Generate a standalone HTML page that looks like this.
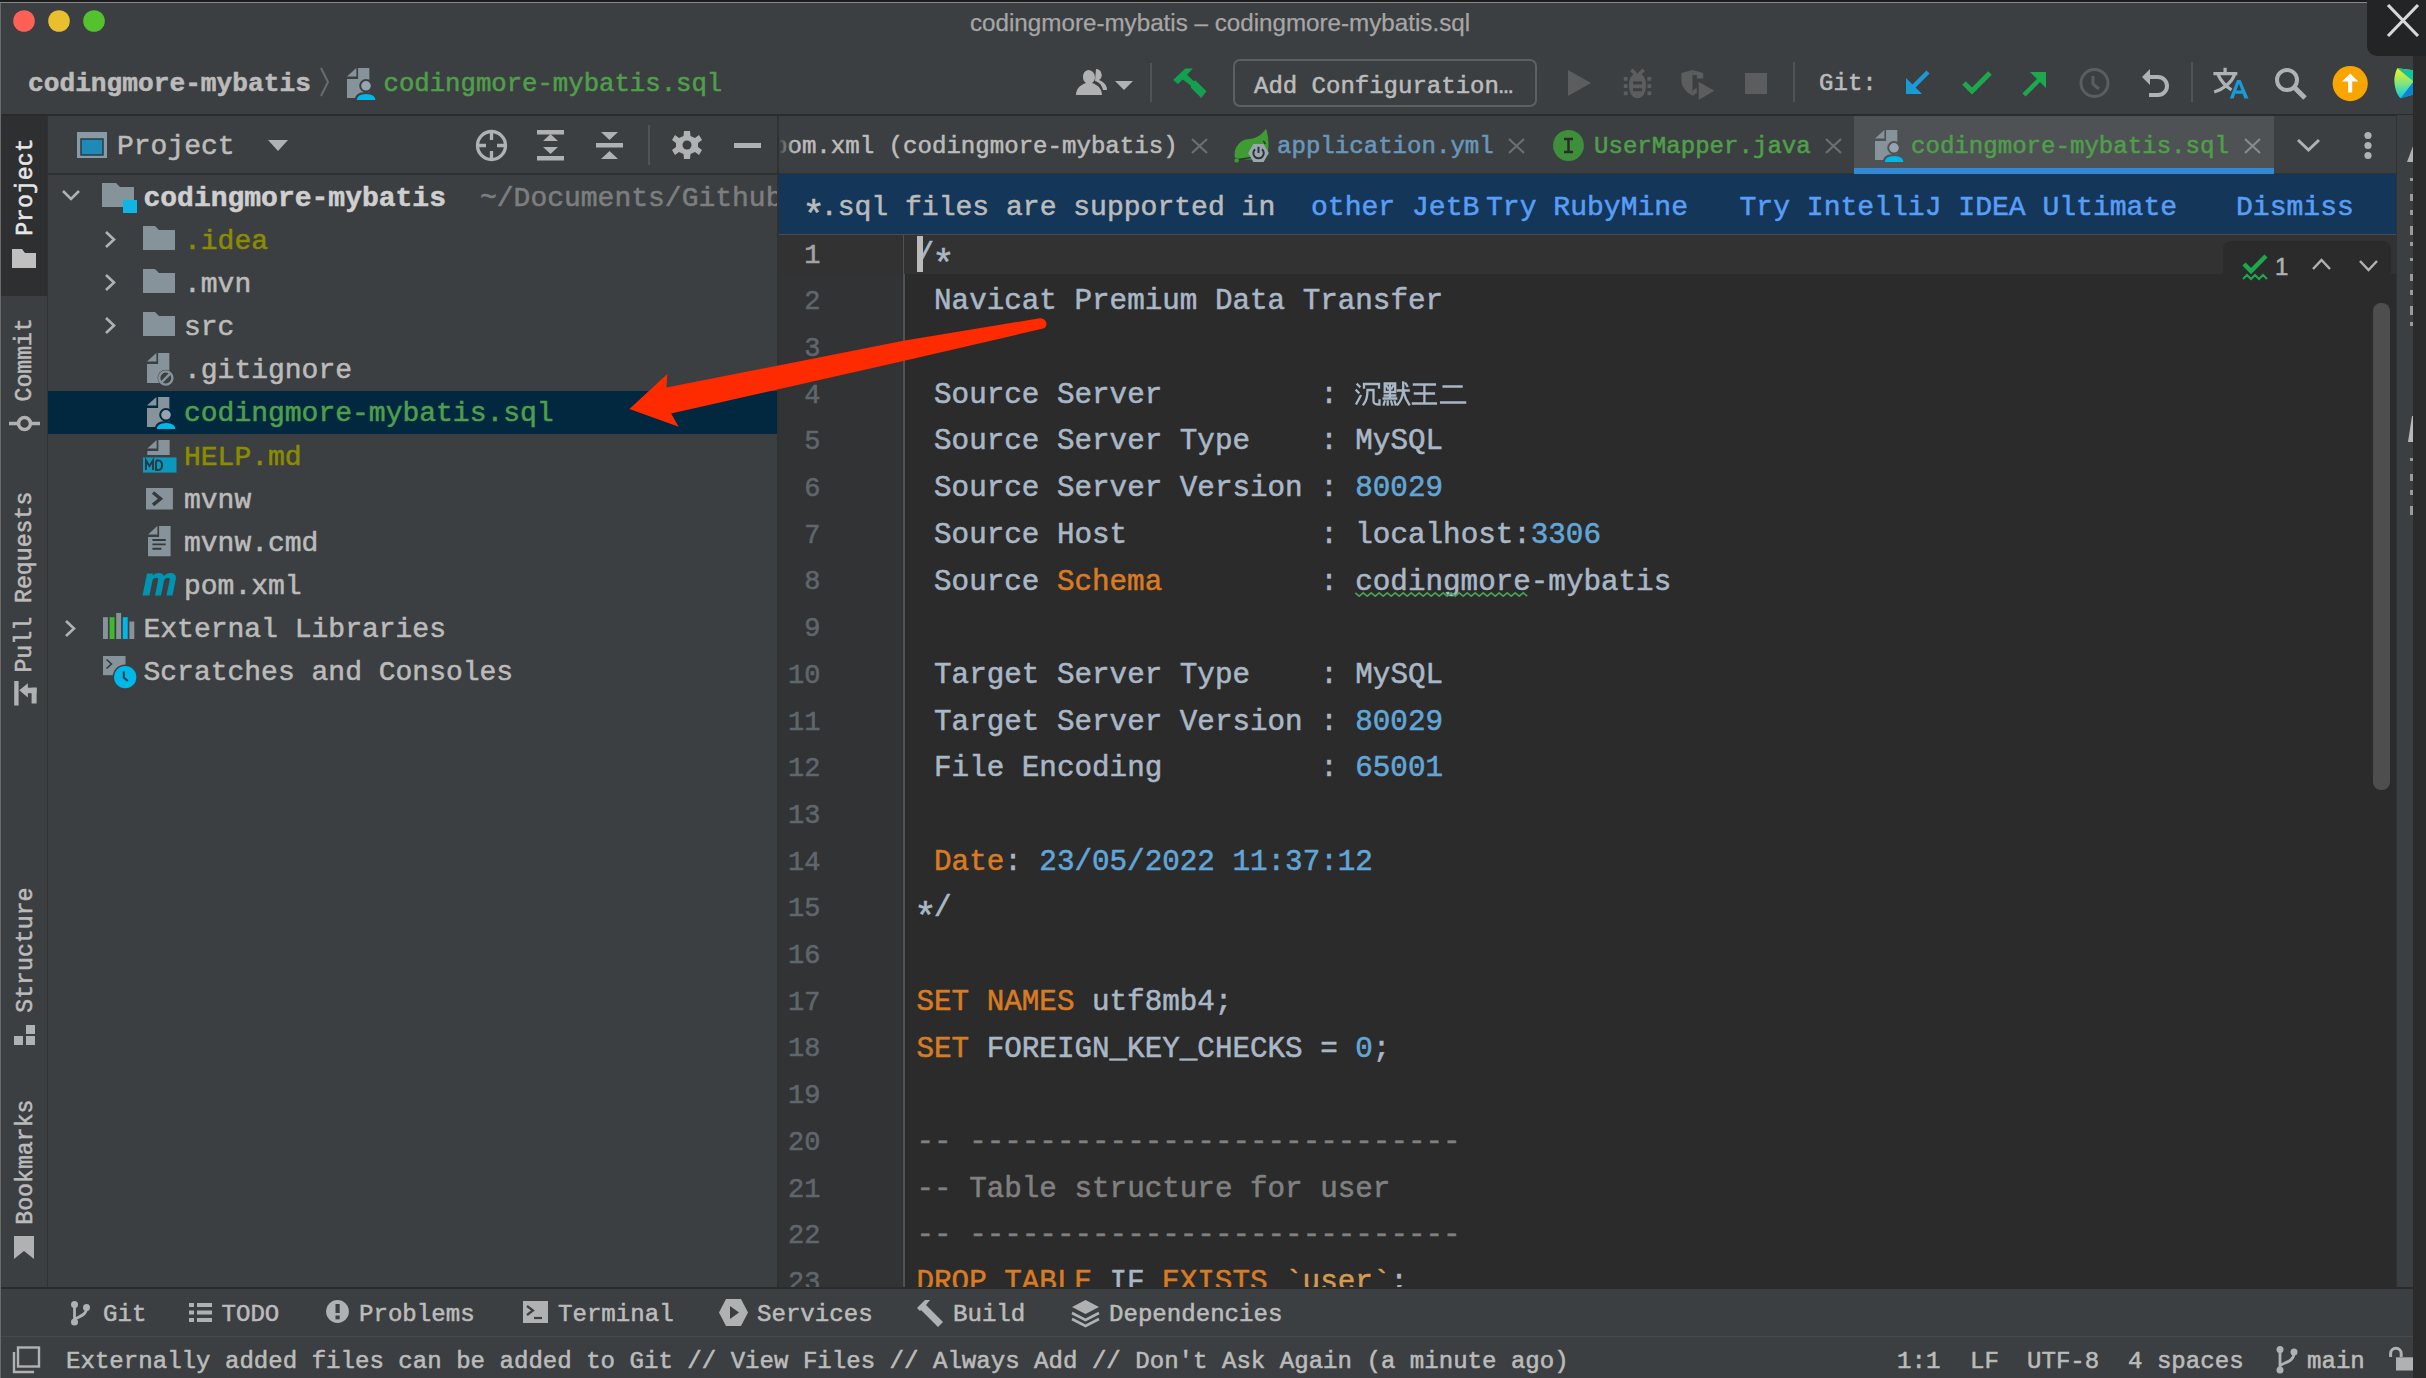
<!DOCTYPE html><html><head><meta charset="utf-8"><style>
html,body{margin:0;padding:0;width:2426px;height:1378px;overflow:hidden;background:#1e1f22;}
#root{position:relative;width:2426px;height:1378px;overflow:hidden;background:#3c3f41;}
.t{position:absolute;white-space:pre;line-height:1.1328;-webkit-text-stroke:0.55px currentColor;}
.r{position:absolute;}
.s{position:absolute;overflow:visible;}
</style></head><body><div id="root">
<div class="r" style="left:0px;top:0px;width:2426px;height:3px;background:#1c1c1c;"></div>
<div class="r" style="left:0px;top:2px;width:2426px;height:1px;background:#8a8a8a;"></div>
<div class="r" style="left:0px;top:3px;width:2426px;height:112px;background:#3c3f41;"></div>
<div class="r" style="left:2367px;top:0px;width:59px;height:56px;background:#222426;border-bottom-left-radius:10px;"></div>
<svg class="s" style="left:2385px;top:3px;" width="36" height="36" viewBox="0 0 36 36"><path d="M3 2 L33 33 M33 2 L3 33" stroke="#d8d8d8" stroke-width="3.2" fill="none"/></svg>
<svg class="s" style="left:0px;top:0px;" width="120" height="45" viewBox="0 0 120 45"><circle cx="24" cy="21" r="10.8" fill="#fe5f57"/><circle cx="59" cy="21" r="10.8" fill="#e9bf2d"/><circle cx="94" cy="21" r="10.8" fill="#54c22f"/></svg>
<div class="t" style="left:970.00px;top:8.85px;font-size:24.2px;color:#a6a6a6;font-weight:400;font-family:'Liberation Sans';letter-spacing:0px;-webkit-text-stroke:0.25px currentColor;">codingmore-mybatis – codingmore-mybatis.sql</div>
<div class="t" style="left:28.00px;top:69.69px;font-size:26.2px;color:#bbbbbb;font-weight:700;font-family:'Liberation Mono';letter-spacing:0px;">codingmore-mybatis</div>
<svg class="s" style="left:318px;top:66px;" width="14" height="32" viewBox="0 0 14 32"><path d="M3 2 L10 16 L3 30" stroke="#6b6b6b" stroke-width="2" fill="none"/></svg>
<svg class="s" style="left:347.25px;top:68.2px;" width="32" height="34" viewBox="0 0 32 34"><path d="M0 8.5 L9.35 0 L9.35 8.5 Z" fill="#87939b"/><path d="M11.1 0 H22.35 V30 H0 V10.9 H11.1 Z" fill="#87939b"/><circle cx="19" cy="17.8" r="5.8" fill="#95a4ae" stroke="#3c3f41" stroke-width="2"/><path d="M8.65 33 C8.65 27.3 13 25 19.1 25 C25.2 25 29.55 27.3 29.55 33 Z" fill="#00b8e8" stroke="#3c3f41" stroke-width="2"/></svg>
<div class="t" style="left:383.50px;top:70.13px;font-size:25.67px;color:#4f9f4a;font-weight:400;font-family:'Liberation Mono';letter-spacing:0px;">codingmore-mybatis.sql</div>
<svg class="s" style="left:1076px;top:68px;" width="60" height="30" viewBox="0 0 60 30"><path d="M12 2 a7 7 0 0 1 7 7 a7 7 0 0 1 -3 6 c6 2 10 6 10 12 L0 27 c0 -6 4 -10 10 -12 a7 7 0 0 1 -3 -6 a7 7 0 0 1 5 -7z" fill="#afb1b3"/><path d="M20 1 a6 6 0 0 1 3 11 c5 2 8 5 8 10 l-4 0 c-1 -5 -4 -8 -8 -9 z" fill="#afb1b3"/><path d="M39 13 L57 13 L48 22 Z" fill="#afb1b3"/></svg>
<div class="r" style="left:1150px;top:63px;width:2px;height:39px;background:#535353;"></div>
<svg class="s" style="left:1170px;top:65px;" width="40" height="36" viewBox="0 0 40 36"><path d="M3.1 15.1 L15.3 3.5 L22.9 3.5 L17 9.8 L23.5 16 L25.5 15.6 L36.4 26.3 L31.2 32.9 L21 22.8 L20.8 20.6 L12.7 14.4 L8 19 Z" fill="#13a150"/></svg>
<div class="r" style="left:1233px;top:59px;width:304px;height:48px;background:transparent;box-sizing:border-box;border:2px solid #5e6060;border-radius:7px;"></div>
<div class="t" style="left:1254.00px;top:72.52px;font-size:24.0px;color:#bbbbbb;font-weight:400;font-family:'Liberation Mono';letter-spacing:0px;">Add Configuration…</div>
<svg class="s" style="left:1568px;top:70px;" width="24" height="26" viewBox="0 0 24 26"><path d="M0 0 L23 13 L0 26 Z" fill="#5c5d5e"/></svg>
<svg class="s" style="left:1623px;top:68px;" width="30" height="32" viewBox="0 0 30 32"><path d="M8.3 1.8 L13 6.5 M20.7 1.8 L16 6.5" stroke="#5c5d5e" stroke-width="3.6"/><rect x="0.8" y="9" width="3.8" height="3.8" fill="#5c5d5e"/><rect x="0.8" y="16.2" width="3.8" height="3.8" fill="#5c5d5e"/><rect x="0.8" y="23.4" width="3.8" height="3.8" fill="#5c5d5e"/><rect x="24.4" y="9" width="3.8" height="3.8" fill="#5c5d5e"/><rect x="24.4" y="16.2" width="3.8" height="3.8" fill="#5c5d5e"/><rect x="24.4" y="23.4" width="3.8" height="3.8" fill="#5c5d5e"/><path d="M14.5 5.2 C20 5.2 23 10 23 17 C23 25 19.5 30.3 14.5 30.3 C9.5 30.3 6 25 6 17 C6 10 9 5.2 14.5 5.2 Z" fill="#5c5d5e"/><rect x="10" y="13.4" width="9" height="3" fill="#3c3f41"/><rect x="10" y="20.2" width="9" height="3" fill="#3c3f41"/></svg>
<svg class="s" style="left:1681px;top:70px;" width="34" height="31" viewBox="0 0 34 31"><path d="M0.4 3 L11.5 0 L11.5 25.8 C5 22 0.4 17 0.4 10 Z" fill="#5c5d5e"/><path d="M11.5 0 L22.2 3 L22.2 8.6 L15.8 8.6 L15.8 5 L11.5 5 Z" fill="#5c5d5e"/><path d="M11.5 21 L15.8 17.5 L15.8 23 L11.5 25.8 Z" fill="#5c5d5e"/><path d="M17.7 11.8 L33.3 20.8 L17.7 29.9 Z" fill="#5c5d5e"/></svg>
<svg class="s" style="left:1745px;top:73px;" width="23" height="22" viewBox="0 0 23 22"><rect x="0" y="0" width="22" height="21" fill="#5c5d5e"/></svg>
<div class="r" style="left:1793px;top:62px;width:2px;height:40px;background:#535353;"></div>
<div class="t" style="left:1819.00px;top:70.45px;font-size:24.08px;color:#bbbbbb;font-weight:400;font-family:'Liberation Mono';letter-spacing:0px;">Git:</div>
<svg class="s" style="left:1904px;top:70px;" width="26" height="26" viewBox="0 0 26 26"><path d="M24 2 L8 18" stroke="#1a9ad6" stroke-width="4.5"/><path d="M2 8 L2 24 L18 24 Z" fill="#1a9ad6"/></svg>
<svg class="s" style="left:1961px;top:70px;" width="32" height="26" viewBox="0 0 32 26"><path d="M3 13 L11 21 L29 3" stroke="#1ea84e" stroke-width="5" fill="none"/></svg>
<svg class="s" style="left:2021px;top:71px;" width="27" height="26" viewBox="0 0 27 26"><path d="M3 24 L19 8" stroke="#1ea84e" stroke-width="4.5"/><path d="M9 1 L25 1 L25 17 Z" fill="#1ea84e"/></svg>
<svg class="s" style="left:2079px;top:68px;" width="32" height="32" viewBox="0 0 32 32"><circle cx="15.5" cy="15" r="13.5" stroke="#5b5d5f" stroke-width="3" fill="none"/><path d="M14 8 L14 16 L20 21" stroke="#5b5d5f" stroke-width="3" fill="none"/></svg>
<svg class="s" style="left:2140px;top:68px;" width="32" height="30" viewBox="0 0 32 30"><path d="M2 9 L10 1 L10 17 Z" fill="#afb1b3"/><path d="M9 9 L18 9 A9 9 0 0 1 18 27 L9 27" stroke="#afb1b3" stroke-width="4" fill="none"/></svg>
<div class="r" style="left:2191px;top:62px;width:2px;height:40px;background:#535353;"></div>
<svg class="s" style="left:2212px;top:68px;" width="38" height="32" viewBox="0 0 38 32"><path d="M13.1 -0.3 V4.2 M1.4 5.6 H25.3 M6.1 6.8 C9 13 13 18 19.5 21.8 M22.5 6.8 C20 14 12 21 2.2 24" stroke="#afb1b3" stroke-width="3.2" fill="none"/><path d="M17.8 30.5 L25 12 L28.6 12 L36.5 30.5 L32.4 30.5 L30.6 25.8 L23.2 25.8 L21.6 30.5 Z M24.4 22.4 L29.4 22.4 L26.9 15.6 Z" fill="#1a9ad6"/></svg>
<svg class="s" style="left:2274px;top:67px;" width="34" height="34" viewBox="0 0 34 34"><circle cx="13" cy="13" r="10" stroke="#afb1b3" stroke-width="4" fill="none"/><path d="M20 20 L31 31" stroke="#afb1b3" stroke-width="5"/></svg>
<svg class="s" style="left:2332px;top:65px;" width="36" height="37" viewBox="0 0 36 37"><circle cx="18.2" cy="18.6" r="17.6" fill="#f8a500"/><path d="M18.2 8.6 L26.4 16.6 L20.2 16.6 L20.2 27.6 L16.2 27.6 L16.2 16.6 L10 16.6 Z" fill="#ffffff"/></svg>
<svg class="s" style="left:2390px;top:65px;" width="24" height="36" viewBox="0 0 24 36"><defs><linearGradient id="lg" x1="0" y1="0" x2="0" y2="1"><stop offset="0" stop-color="#f2f418"/><stop offset="0.5" stop-color="#84e47c"/><stop offset="1" stop-color="#00cce8"/></linearGradient></defs><path d="M7.3 3.2 C5 8 4 13 4.4 17 C5 24 7 30 10.6 33.3 L23.5 29.6 L23.5 5.3 Z" fill="url(#lg)"/><path d="M7.3 3.2 L23.5 5.3 L23.5 16.5 Z" fill="#10c49c"/><path d="M10.6 33.3 L23.5 29.6 L23.5 16.5 Z" fill="#0a84dc"/></svg>
<div class="r" style="left:0px;top:115px;width:47px;height:1172px;background:#3c3f41;"></div>
<div class="r" style="left:47px;top:115px;width:1px;height:1172px;background:#323232;"></div>
<div class="r" style="left:1px;top:115px;width:46px;height:181px;background:#2d2f30;"></div>
<div class="t" style="left:-23.5px;top:173.9px;width:98px;font-size:23.2px;color:#e6e6e6;font-weight:400;font-family:'Liberation Mono';transform:rotate(-90deg);text-align:center;">Project</div>
<svg class="s" style="left:12px;top:249px;" width="25" height="19" viewBox="0 0 25 19"><path d="M0 0 L10 0 L13 4 L24 4 L24 19 L0 19 Z" fill="#c0c0c0"/></svg>
<div class="t" style="left:-15.9px;top:347.1px;width:82.80000000000001px;font-size:23.2px;color:#bbbbbb;font-weight:400;font-family:'Liberation Mono';transform:rotate(-90deg);text-align:center;">Commit</div>
<svg class="s" style="left:9px;top:414px;" width="31" height="19" viewBox="0 0 31 19"><circle cx="15.5" cy="9.5" r="6" stroke="#afb1b3" stroke-width="3.5" fill="none"/><path d="M0 9.5 L9 9.5 M22 9.5 L31 9.5" stroke="#afb1b3" stroke-width="3.5"/></svg>
<div class="t" style="left:-65.8px;top:568.6px;width:182.5px;font-size:23.2px;color:#bbbbbb;font-weight:400;font-family:'Liberation Mono';transform:rotate(-90deg);text-align:center;">Pull Requests</div>
<svg class="s" style="left:12px;top:681px;" width="26" height="25" viewBox="0 0 26 25"><rect x="2.2" y="0" width="4.4" height="24.5" fill="#afb1b3"/><path d="M7.2 9.3 L15.9 2.3 L15.9 16.5 Z" fill="#afb1b3"/><rect x="15" y="6.7" width="9.6" height="5.5" fill="#afb1b3"/><rect x="19.6" y="6.7" width="5" height="15.8" fill="#afb1b3"/></svg>
<div class="t" style="left:-38.5px;top:936.9px;width:128px;font-size:23.2px;color:#bbbbbb;font-weight:400;font-family:'Liberation Mono';transform:rotate(-90deg);text-align:center;">Structure</div>
<svg class="s" style="left:14px;top:1025px;" width="21" height="21" viewBox="0 0 21 21"><rect x="0" y="11" width="9" height="9" fill="#afb1b3"/><rect x="12" y="11" width="9" height="9" fill="#afb1b3"/><rect x="12" y="0" width="9" height="9" fill="#afb1b3"/></svg>
<div class="t" style="left:-37.5px;top:1148.9px;width:126px;font-size:23.2px;color:#bbbbbb;font-weight:400;font-family:'Liberation Mono';transform:rotate(-90deg);text-align:center;">Bookmarks</div>
<svg class="s" style="left:14px;top:1236px;" width="21" height="23" viewBox="0 0 21 23"><path d="M0 0 L20 0 L20 23 L10 15 L0 23 Z" fill="#afb1b3"/></svg>
<div class="r" style="left:48px;top:115px;width:730px;height:1172px;background:#3c3f41;"></div>
<div class="r" style="left:48px;top:173px;width:730px;height:2px;background:#2d2f31;"></div>
<svg class="s" style="left:76px;top:131px;" width="32" height="28" viewBox="0 0 32 28"><rect x="1" y="1" width="30" height="26" fill="#8a9aa5"/><rect x="5" y="8" width="22" height="16" fill="#1e8ab5" stroke="#2a3a44" stroke-width="1.5"/></svg>
<div class="t" style="left:117.00px;top:130.99px;font-size:28.0px;color:#bbbbbb;font-weight:400;font-family:'Liberation Mono';letter-spacing:0px;">Project</div>
<svg class="s" style="left:268px;top:140px;" width="20" height="12" viewBox="0 0 20 12"><path d="M0 0 L20 0 L10 11 Z" fill="#afb1b3"/></svg>
<svg class="s" style="left:475px;top:129px;" width="34" height="34" viewBox="0 0 34 34"><circle cx="16.5" cy="16.5" r="14" stroke="#afb1b3" stroke-width="3.3" fill="none"/><path d="M16.5 2 L16.5 11 M16.5 22 L16.5 31 M2 16.5 L11 16.5 M22 16.5 L31 16.5" stroke="#afb1b3" stroke-width="3.3"/></svg>
<svg class="s" style="left:537px;top:130px;" width="28" height="32" viewBox="0 0 28 32"><rect x="0" y="0" width="27" height="4.5" fill="#afb1b3"/><rect x="0" y="26" width="27" height="4.5" fill="#afb1b3"/><path d="M6 11 L21 11 L13.5 4 Z M6 17 L21 17 L13.5 24 Z" fill="#afb1b3"/></svg>
<svg class="s" style="left:596px;top:131px;" width="28" height="30" viewBox="0 0 28 30"><path d="M5 1 L22 1 L13.5 9 Z" fill="#afb1b3"/><rect x="0" y="12" width="27" height="4.5" fill="#afb1b3"/><path d="M5 28 L22 28 L13.5 20 Z" fill="#afb1b3"/></svg>
<div class="r" style="left:648px;top:125px;width:2px;height:40px;background:#535353;"></div>
<svg class="s" style="left:673px;top:131px;" width="30" height="30" viewBox="0 0 30 30"><g transform="translate(14 14)"><path d="M-3 -14 L3 -14 L3.5 -9 L8 -7 L12 -10 L15 -5 L11 -2 L11 2 L15 5 L12 10 L8 7 L3.5 9 L3 14 L-3 14 L-3.5 9 L-8 7 L-12 10 L-15 5 L-11 2 L-11 -2 L-15 -5 L-12 -10 L-8 -7 L-3.5 -9 Z" fill="#afb1b3"/><circle cx="0" cy="0" r="4.5" fill="#3c3f41"/></g></svg>
<div class="r" style="left:734px;top:143px;width:27px;height:5px;background:#afb1b3;"></div>
<div class="r" style="left:48px;top:391px;width:730px;height:43px;background:#022840;"></div>
<svg class="s" style="left:61px;top:189px;" width="20" height="12" viewBox="0 0 20 12"><path d="M2 2 L10 10 L18 2" stroke="#afb1b3" stroke-width="2.6" fill="none"/></svg>
<svg class="s" style="left:102px;top:183px;" width="36" height="31" viewBox="0 0 36 31"><path d="M0 0 L14 0 L18 4 L32 4 L32 18 L22 18 L22 24 L0 24 Z" fill="#87939b"/><rect x="21" y="17" width="14" height="13" fill="#10b5e8"/></svg>
<div class="t" style="left:143.50px;top:182.69px;font-size:28.0px;color:#cfcfcf;font-weight:700;font-family:'Liberation Mono';letter-spacing:0px;">codingmore-mybatis</div>
<div class="t" style="left:480.00px;top:182.69px;font-size:28.0px;color:#7c7e7f;font-weight:400;font-family:'Liberation Mono';letter-spacing:0px;">~/Documents/Github</div>
<svg class="s" style="left:104px;top:230px;" width="13" height="19" viewBox="0 0 13 19"><path d="M2 2 L10 9.5 L2 17" stroke="#afb1b3" stroke-width="2.6" fill="none"/></svg>
<svg class="s" style="left:143px;top:226px;" width="32" height="25" viewBox="0 0 32 25"><path d="M0 0 L12 0 L16 4 L32 4 L32 24 L0 24 Z" fill="#87939b"/></svg>
<div class="t" style="left:184.00px;top:225.84px;font-size:28.0px;color:#8c8c00;font-weight:400;font-family:'Liberation Mono';letter-spacing:0px;">.idea</div>
<svg class="s" style="left:104px;top:273px;" width="13" height="19" viewBox="0 0 13 19"><path d="M2 2 L10 9.5 L2 17" stroke="#afb1b3" stroke-width="2.6" fill="none"/></svg>
<svg class="s" style="left:143px;top:269px;" width="32" height="25" viewBox="0 0 32 25"><path d="M0 0 L12 0 L16 4 L32 4 L32 24 L0 24 Z" fill="#87939b"/></svg>
<div class="t" style="left:184.00px;top:268.99px;font-size:28.0px;color:#bbbbbb;font-weight:400;font-family:'Liberation Mono';letter-spacing:0px;">.mvn</div>
<svg class="s" style="left:104px;top:316px;" width="13" height="19" viewBox="0 0 13 19"><path d="M2 2 L10 9.5 L2 17" stroke="#afb1b3" stroke-width="2.6" fill="none"/></svg>
<svg class="s" style="left:143px;top:312px;" width="32" height="25" viewBox="0 0 32 25"><path d="M0 0 L12 0 L16 4 L32 4 L32 24 L0 24 Z" fill="#87939b"/></svg>
<div class="t" style="left:184.00px;top:312.14px;font-size:28.0px;color:#bbbbbb;font-weight:400;font-family:'Liberation Mono';letter-spacing:0px;">src</div>
<svg class="s" style="left:147.4px;top:353.3px;" width="30" height="34" viewBox="0 0 30 34"><path d="M0 8.5 L9.35 0 L9.35 8.5 Z" fill="#87939b"/><path d="M11.1 0 H22.35 V30 H0 V10.9 H11.1 Z" fill="#87939b"/><circle cx="18.8" cy="25" r="8.2" fill="#3c3f41"/><circle cx="18.8" cy="25" r="6.6" stroke="#87939b" stroke-width="2.4" fill="none"/><path d="M14.5 29.3 L23.1 20.7" stroke="#87939b" stroke-width="2.4"/></svg>
<div class="t" style="left:184.00px;top:355.29px;font-size:28.0px;color:#bbbbbb;font-weight:400;font-family:'Liberation Mono';letter-spacing:0px;">.gitignore</div>
<svg class="s" style="left:147.4px;top:396.7px;" width="32" height="34" viewBox="0 0 32 34"><path d="M0 8.5 L9.35 0 L9.35 8.5 Z" fill="#87939b"/><path d="M11.1 0 H22.35 V30 H0 V10.9 H11.1 Z" fill="#87939b"/><circle cx="19" cy="17.8" r="5.8" fill="#95a4ae" stroke="#022840" stroke-width="2"/><path d="M8.65 33 C8.65 27.3 13 25 19.1 25 C25.2 25 29.55 27.3 29.55 33 Z" fill="#00b8e8" stroke="#022840" stroke-width="2"/></svg>
<div class="t" style="left:184.00px;top:398.44px;font-size:28.0px;color:#4f9f4a;font-weight:400;font-family:'Liberation Mono';letter-spacing:0px;">codingmore-mybatis.sql</div>
<svg class="s" style="left:143.1px;top:439.6px;" width="34" height="33" viewBox="0 0 34 33"><path d="M4.3 8.5 L13.65 0 L13.65 8.5 Z" fill="#87939b"/><path d="M15.4 0 H26.65 V15.1 H4.3 V10.9 H15.4 Z" fill="#87939b"/><rect x="0" y="17.4" width="33.5" height="15.2" fill="#0a98bd"/><path d="M3 30 V20.5 L6.5 26 L10 20.5 V30 M13 20.5 V30 H15.5 C20 30 20.5 20.5 15.5 20.5 H13" stroke="#2a3a44" stroke-width="2" fill="none"/></svg>
<div class="t" style="left:184.00px;top:441.59px;font-size:28.0px;color:#8c8c00;font-weight:400;font-family:'Liberation Mono';letter-spacing:0px;">HELP.md</div>
<svg class="s" style="left:145.5px;top:487.5px;" width="27" height="22" viewBox="0 0 27 22"><rect x="0" y="0" width="26.9" height="21.5" fill="#87939b"/><path d="M7 4.5 L14.5 10.7 L7 16.9" stroke="#34393c" stroke-width="3.4" fill="none"/></svg>
<div class="t" style="left:184.00px;top:484.74px;font-size:28.0px;color:#bbbbbb;font-weight:400;font-family:'Liberation Mono';letter-spacing:0px;">mvnw</div>
<svg class="s" style="left:147.6px;top:526.4px;" width="23" height="31" viewBox="0 0 23 31"><path d="M0 8.5 L9.35 0 L9.35 8.5 Z" fill="#87939b"/><path d="M11.1 0 H22.6 V30.2 H0 V10.9 H11.1 Z" fill="#87939b"/><path d="M4.4 14 H17.7 M4.4 18.4 H17.7 M4.4 22.8 H13.4" stroke="#34393c" stroke-width="1.9"/></svg>
<div class="t" style="left:184.00px;top:527.89px;font-size:28.0px;color:#bbbbbb;font-weight:400;font-family:'Liberation Mono';letter-spacing:0px;">mvnw.cmd</div>
<svg class="s" style="left:142.2px;top:573.4px;" width="35" height="23" viewBox="0 0 35 23"><path d="M0.5 22.5 L5 0.6 L11 0.6 L10.6 2.6 C12.5 0.8 14.5 0 17 0 C19.5 0 21.2 1 21.8 3 C23.8 1 26 0 28.5 0 C32.5 0 34.5 2.5 33.8 6 L30.5 22.5 L24.5 22.5 L27.6 7.5 C28 5.5 27.3 4.8 25.8 4.8 C24 4.8 22.5 6 22 8 L19 22.5 L13 22.5 L16 7.5 C16.4 5.5 15.7 4.8 14.2 4.8 C12.4 4.8 10.9 6 10.4 8 L7.4 22.5 Z" fill="#0094b3"/></svg>
<div class="t" style="left:184.00px;top:571.04px;font-size:28.0px;color:#bbbbbb;font-weight:400;font-family:'Liberation Mono';letter-spacing:0px;">pom.xml</div>
<svg class="s" style="left:64px;top:619px;" width="13" height="19" viewBox="0 0 13 19"><path d="M2 2 L10 9.5 L2 17" stroke="#afb1b3" stroke-width="2.6" fill="none"/></svg>
<svg class="s" style="left:103px;top:612.8px;" width="32" height="27" viewBox="0 0 32 27"><rect x="0" y="4.2" width="4.9" height="21.8" fill="#87939b"/><rect x="6.6" y="4.2" width="4.9" height="21.8" fill="#3cbb2c"/><rect x="13.2" y="0" width="4.9" height="26" fill="#87939b"/><rect x="19.8" y="4.2" width="4.9" height="21.8" fill="#00b8e8"/><rect x="26.4" y="8.5" width="4.9" height="17.5" fill="#87939b"/></svg>
<div class="t" style="left:143.50px;top:614.19px;font-size:28.0px;color:#bbbbbb;font-weight:400;font-family:'Liberation Mono';letter-spacing:0px;">External Libraries</div>
<svg class="s" style="left:103px;top:656.3px;" width="35" height="34" viewBox="0 0 35 34"><path d="M0 0 H22.5 V19.2 H0 Z" fill="#87939b"/><circle cx="22.2" cy="21.2" r="12.6" fill="#3c3f41"/><path d="M3.5 3.5 L8.5 8 L3.5 12.5" stroke="#34393c" stroke-width="1.6" fill="none"/><circle cx="22.2" cy="21.2" r="11.1" fill="#00b8e8"/><path d="M20.8 15.5 V21.5 L24.8 25" stroke="#2b3a44" stroke-width="2" fill="none"/></svg>
<div class="t" style="left:143.50px;top:657.34px;font-size:28.0px;color:#bbbbbb;font-weight:400;font-family:'Liberation Mono';letter-spacing:0px;">Scratches and Consoles</div>
<div class="r" style="left:777px;top:115px;width:2px;height:1172px;background:#2f3133;"></div>
<div class="r" style="left:779px;top:115px;width:1618px;height:59px;background:#3c3f41;"></div>
<div class="r" style="left:779px;top:173px;width:1618px;height:1px;background:#323232;"></div>
<div class="t" style="left:773.00px;top:132.65px;font-size:24.08px;color:#bbbbbb;font-weight:400;font-family:'Liberation Mono';letter-spacing:0px;">pom.xml (codingmore-mybatis)</div>
<div class="r" style="left:762px;top:120px;width:15px;height:50px;background:#3c3f41;"></div>
<div class="r" style="left:777px;top:115px;width:2px;height:59px;background:#2f3133;"></div>
<div class="r" style="left:779px;top:120px;width:14px;height:50px;background:linear-gradient(to right,#3c3f41,rgba(60,63,65,0.0));"></div>
<svg class="s" style="left:1191px;top:138px;" width="17" height="16" viewBox="0 0 17 16"><path d="M1 1 L16 15 M16 1 L1 15" stroke="#6e6e6e" stroke-width="2.2"/></svg>
<svg class="s" style="left:1225px;top:120px;" width="50" height="45" viewBox="0 0 50 45"><path d="M10 37.5 C8 28 15 19.5 24 19 C32 18.5 37 14 41 8.7 C44 17 44 28 42.5 35 L40 37.5 L26 39.5 C20 39.5 14 39 10 37.5 Z" fill="#3f9b34"/><path d="M14 39.6 L26 37.4" stroke="#2b3a2b" stroke-width="1.5"/><circle cx="11.7" cy="40.4" r="2.2" fill="#3f9b34"/><path d="M38.4 21 L40.5 24" stroke="#2b3a2b" stroke-width="1.4"/><path d="M23.2 33 L28.4 24 L38.6 24 L43.8 33 L38.6 42 L28.4 42 Z" fill="#9aa7b0"/><path d="M30.1 29.2 A5.2 5.2 0 1 0 37 29.2" stroke="#2e3336" stroke-width="2" fill="none"/><path d="M33.5 26.8 V33" stroke="#2e3336" stroke-width="2"/></svg>
<div class="t" style="left:1277.00px;top:132.65px;font-size:24.08px;color:#6897bb;font-weight:400;font-family:'Liberation Mono';letter-spacing:0px;">application.yml</div>
<svg class="s" style="left:1508px;top:138px;" width="17" height="16" viewBox="0 0 17 16"><path d="M1 1 L16 15 M16 1 L1 15" stroke="#6e6e6e" stroke-width="2.2"/></svg>
<svg class="s" style="left:1553px;top:130px;" width="32" height="32" viewBox="0 0 32 32"><circle cx="15.5" cy="15.5" r="15.4" fill="#3e8f3a"/><path d="M11 9 L20 9 M15.5 9 L15.5 22 M11 22 L20 22" stroke="#2b2b2b" stroke-width="2.5"/></svg>
<div class="t" style="left:1594.00px;top:132.65px;font-size:24.08px;color:#4f9f4a;font-weight:400;font-family:'Liberation Mono';letter-spacing:0px;">UserMapper.java</div>
<svg class="s" style="left:1825px;top:138px;" width="17" height="16" viewBox="0 0 17 16"><path d="M1 1 L16 15 M16 1 L1 15" stroke="#6e6e6e" stroke-width="2.2"/></svg>
<div class="r" style="left:1854px;top:115px;width:420px;height:59px;background:#4e5254;"></div>
<div class="r" style="left:1854px;top:168px;width:420px;height:6px;background:#3589d2;"></div>
<svg class="s" style="left:1874.8px;top:130.3px;" width="32" height="34" viewBox="0 0 32 34"><path d="M0 8.5 L9.35 0 L9.35 8.5 Z" fill="#87939b"/><path d="M11.1 0 H22.35 V30 H0 V10.9 H11.1 Z" fill="#87939b"/><circle cx="19" cy="17.8" r="5.8" fill="#95a4ae" stroke="#4e5254" stroke-width="2"/><path d="M8.65 33 C8.65 27.3 13 25 19.1 25 C25.2 25 29.55 27.3 29.55 33 Z" fill="#00b8e8" stroke="#4e5254" stroke-width="2"/></svg>
<div class="t" style="left:1911.00px;top:132.65px;font-size:24.08px;color:#4f9f4a;font-weight:400;font-family:'Liberation Mono';letter-spacing:0px;">codingmore-mybatis.sql</div>
<svg class="s" style="left:2244px;top:138px;" width="17" height="16" viewBox="0 0 17 16"><path d="M1 1 L16 15 M16 1 L1 15" stroke="#8a8a8a" stroke-width="2.2"/></svg>
<svg class="s" style="left:2296px;top:138px;" width="25" height="15" viewBox="0 0 25 15"><path d="M2 2 L12.5 12 L23 2" stroke="#afb1b3" stroke-width="3" fill="none"/></svg>
<svg class="s" style="left:2362px;top:131px;" width="12" height="30" viewBox="0 0 12 30"><circle cx="6" cy="4.5" r="3.6" fill="#afb1b3"/><circle cx="6" cy="14.5" r="3.6" fill="#afb1b3"/><circle cx="6" cy="24.5" r="3.6" fill="#afb1b3"/></svg>
<div class="r" style="left:0px;top:114.3px;width:2413px;height:1.7px;background:#2b2b2b;"></div>
<div class="r" style="left:779px;top:174px;width:1618px;height:60px;background:#143659;"></div>
<div class="r" style="left:779px;top:234px;width:1618px;height:1px;background:#4a4d4f;"></div>
<div class="t" style="left:804.00px;top:191.65px;font-size:28.05px;color:#bbbbbb;font-weight:400;font-family:'Liberation Mono';letter-spacing:0px;"> .sql files are supported in</div>
<div class="t" style="left:802.30px;top:195.17px;font-size:38px;color:#bbbbbb;font-weight:400;font-family:'Liberation Mono';letter-spacing:0px;">*</div>
<div class="t" style="left:1311.00px;top:191.65px;font-size:28.05px;color:#589df6;font-weight:400;font-family:'Liberation Mono';letter-spacing:0px;">other JetB</div>
<div class="t" style="left:1486.00px;top:191.65px;font-size:28.05px;color:#589df6;font-weight:400;font-family:'Liberation Mono';letter-spacing:0px;">Try RubyMine</div>
<div class="t" style="left:1739.50px;top:191.65px;font-size:28.05px;color:#589df6;font-weight:400;font-family:'Liberation Mono';letter-spacing:0px;">Try IntelliJ IDEA Ultimate</div>
<div class="t" style="left:2236.00px;top:191.65px;font-size:28.05px;color:#589df6;font-weight:400;font-family:'Liberation Mono';letter-spacing:0px;">Dismiss</div>
<div class="r" style="left:779px;top:235px;width:1618px;height:1052px;background:#2b2b2b;"></div>
<div class="r" style="left:779px;top:235px;width:124px;height:1052px;background:#313335;"></div>
<div class="r" style="left:903px;top:235px;width:1.6px;height:1052px;background:#4f5153;"></div>
<div class="r" style="left:779px;top:235px;width:124px;height:39px;background:#323232;"></div>
<div class="r" style="left:904px;top:235px;width:1493px;height:39px;background:#323232;"></div>
<div class="t" style="left:804.30px;top:240.52px;font-size:27px;color:#a4a3a3;font-weight:400;font-family:'Liberation Mono';letter-spacing:0px;">1</div>
<div class="t" style="left:804.30px;top:287.22px;font-size:27px;color:#5f666c;font-weight:400;font-family:'Liberation Mono';letter-spacing:0px;">2</div>
<div class="t" style="left:804.30px;top:333.92px;font-size:27px;color:#5f666c;font-weight:400;font-family:'Liberation Mono';letter-spacing:0px;">3</div>
<div class="t" style="left:804.30px;top:380.62px;font-size:27px;color:#5f666c;font-weight:400;font-family:'Liberation Mono';letter-spacing:0px;">4</div>
<div class="t" style="left:804.30px;top:427.32px;font-size:27px;color:#5f666c;font-weight:400;font-family:'Liberation Mono';letter-spacing:0px;">5</div>
<div class="t" style="left:804.30px;top:474.02px;font-size:27px;color:#5f666c;font-weight:400;font-family:'Liberation Mono';letter-spacing:0px;">6</div>
<div class="t" style="left:804.30px;top:520.72px;font-size:27px;color:#5f666c;font-weight:400;font-family:'Liberation Mono';letter-spacing:0px;">7</div>
<div class="t" style="left:804.30px;top:567.42px;font-size:27px;color:#5f666c;font-weight:400;font-family:'Liberation Mono';letter-spacing:0px;">8</div>
<div class="t" style="left:804.30px;top:614.12px;font-size:27px;color:#5f666c;font-weight:400;font-family:'Liberation Mono';letter-spacing:0px;">9</div>
<div class="t" style="left:788.10px;top:660.82px;font-size:27px;color:#5f666c;font-weight:400;font-family:'Liberation Mono';letter-spacing:0px;">10</div>
<div class="t" style="left:788.10px;top:707.52px;font-size:27px;color:#5f666c;font-weight:400;font-family:'Liberation Mono';letter-spacing:0px;">11</div>
<div class="t" style="left:788.10px;top:754.22px;font-size:27px;color:#5f666c;font-weight:400;font-family:'Liberation Mono';letter-spacing:0px;">12</div>
<div class="t" style="left:788.10px;top:800.92px;font-size:27px;color:#5f666c;font-weight:400;font-family:'Liberation Mono';letter-spacing:0px;">13</div>
<div class="t" style="left:788.10px;top:847.62px;font-size:27px;color:#5f666c;font-weight:400;font-family:'Liberation Mono';letter-spacing:0px;">14</div>
<div class="t" style="left:788.10px;top:894.32px;font-size:27px;color:#5f666c;font-weight:400;font-family:'Liberation Mono';letter-spacing:0px;">15</div>
<div class="t" style="left:788.10px;top:941.02px;font-size:27px;color:#5f666c;font-weight:400;font-family:'Liberation Mono';letter-spacing:0px;">16</div>
<div class="t" style="left:788.10px;top:987.72px;font-size:27px;color:#5f666c;font-weight:400;font-family:'Liberation Mono';letter-spacing:0px;">17</div>
<div class="t" style="left:788.10px;top:1034.42px;font-size:27px;color:#5f666c;font-weight:400;font-family:'Liberation Mono';letter-spacing:0px;">18</div>
<div class="t" style="left:788.10px;top:1081.12px;font-size:27px;color:#5f666c;font-weight:400;font-family:'Liberation Mono';letter-spacing:0px;">19</div>
<div class="t" style="left:788.10px;top:1127.82px;font-size:27px;color:#5f666c;font-weight:400;font-family:'Liberation Mono';letter-spacing:0px;">20</div>
<div class="t" style="left:788.10px;top:1174.52px;font-size:27px;color:#5f666c;font-weight:400;font-family:'Liberation Mono';letter-spacing:0px;">21</div>
<div class="t" style="left:788.10px;top:1221.22px;font-size:27px;color:#5f666c;font-weight:400;font-family:'Liberation Mono';letter-spacing:0px;">22</div>
<div class="t" style="left:788.10px;top:1267.92px;font-size:27px;color:#5f666c;font-weight:400;font-family:'Liberation Mono';letter-spacing:0px;">23</div>
<div class="t" style="left:916.50px;top:238.65px;font-size:29.25px;color:#a9b7c6;font-weight:400;font-family:'Liberation Mono';letter-spacing:0px;">/</div>
<div class="t" style="left:931.90px;top:243.67px;font-size:38px;color:#a9b7c6;font-weight:400;font-family:'Liberation Mono';letter-spacing:0px;">*</div>
<div class="t" style="left:916.50px;top:285.35px;font-size:29.25px;color:#a9b7c6;font-weight:400;font-family:'Liberation Mono';letter-spacing:0px;"> Navicat Premium Data Transfer</div>
<div class="t" style="left:916.50px;top:378.75px;font-size:29.25px;color:#a9b7c6;font-weight:400;font-family:'Liberation Mono';letter-spacing:0px;"> Source Server         : </div>
<div class="t" style="left:1355.25px;top:378.75px;font-size:29.25px;color:#a9b7c6;font-weight:400;font-family:'Liberation Mono';letter-spacing:0px;">    </div>
<div class="t" style="left:916.50px;top:425.45px;font-size:29.25px;color:#a9b7c6;font-weight:400;font-family:'Liberation Mono';letter-spacing:0px;"> Source Server Type    : MySQL</div>
<div class="t" style="left:916.50px;top:472.15px;font-size:29.25px;color:#a9b7c6;font-weight:400;font-family:'Liberation Mono';letter-spacing:0px;"> Source Server Version : </div>
<div class="t" style="left:1355.25px;top:472.15px;font-size:29.25px;color:#62a6d8;font-weight:400;font-family:'Liberation Mono';letter-spacing:0px;">80029</div>
<div class="t" style="left:916.50px;top:518.85px;font-size:29.25px;color:#a9b7c6;font-weight:400;font-family:'Liberation Mono';letter-spacing:0px;"> Source Host           : localhost:</div>
<div class="t" style="left:1530.75px;top:518.85px;font-size:29.25px;color:#62a6d8;font-weight:400;font-family:'Liberation Mono';letter-spacing:0px;">3306</div>
<div class="t" style="left:916.50px;top:565.55px;font-size:29.25px;color:#a9b7c6;font-weight:400;font-family:'Liberation Mono';letter-spacing:0px;"> Source </div>
<div class="t" style="left:1056.90px;top:565.55px;font-size:29.25px;color:#d97b22;font-weight:400;font-family:'Liberation Mono';letter-spacing:0px;">Schema</div>
<div class="t" style="left:1162.20px;top:565.55px;font-size:29.25px;color:#a9b7c6;font-weight:400;font-family:'Liberation Mono';letter-spacing:0px;">         : codingmore-mybatis</div>
<div class="t" style="left:916.50px;top:658.95px;font-size:29.25px;color:#a9b7c6;font-weight:400;font-family:'Liberation Mono';letter-spacing:0px;"> Target Server Type    : MySQL</div>
<div class="t" style="left:916.50px;top:705.65px;font-size:29.25px;color:#a9b7c6;font-weight:400;font-family:'Liberation Mono';letter-spacing:0px;"> Target Server Version : </div>
<div class="t" style="left:1355.25px;top:705.65px;font-size:29.25px;color:#62a6d8;font-weight:400;font-family:'Liberation Mono';letter-spacing:0px;">80029</div>
<div class="t" style="left:916.50px;top:752.35px;font-size:29.25px;color:#a9b7c6;font-weight:400;font-family:'Liberation Mono';letter-spacing:0px;"> File Encoding         : </div>
<div class="t" style="left:1355.25px;top:752.35px;font-size:29.25px;color:#62a6d8;font-weight:400;font-family:'Liberation Mono';letter-spacing:0px;">65001</div>
<div class="t" style="left:916.50px;top:845.75px;font-size:29.25px;color:#a9b7c6;font-weight:400;font-family:'Liberation Mono';letter-spacing:0px;"> </div>
<div class="t" style="left:934.05px;top:845.75px;font-size:29.25px;color:#d97b22;font-weight:400;font-family:'Liberation Mono';letter-spacing:0px;">Date</div>
<div class="t" style="left:1004.25px;top:845.75px;font-size:29.25px;color:#a9b7c6;font-weight:400;font-family:'Liberation Mono';letter-spacing:0px;">: </div>
<div class="t" style="left:1039.35px;top:845.75px;font-size:29.25px;color:#62a6d8;font-weight:400;font-family:'Liberation Mono';letter-spacing:0px;">23/05/2022 11:37:12</div>
<div class="t" style="left:916.50px;top:892.45px;font-size:29.25px;color:#a9b7c6;font-weight:400;font-family:'Liberation Mono';letter-spacing:0px;"> /</div>
<div class="t" style="left:913.90px;top:897.47px;font-size:38px;color:#a9b7c6;font-weight:400;font-family:'Liberation Mono';letter-spacing:0px;">*</div>
<div class="t" style="left:916.50px;top:985.85px;font-size:29.25px;color:#d97b22;font-weight:400;font-family:'Liberation Mono';letter-spacing:0px;">SET NAMES</div>
<div class="t" style="left:1074.45px;top:985.85px;font-size:29.25px;color:#a9b7c6;font-weight:400;font-family:'Liberation Mono';letter-spacing:0px;"> utf8mb4;</div>
<div class="t" style="left:916.50px;top:1032.55px;font-size:29.25px;color:#d97b22;font-weight:400;font-family:'Liberation Mono';letter-spacing:0px;">SET</div>
<div class="t" style="left:969.15px;top:1032.55px;font-size:29.25px;color:#a9b7c6;font-weight:400;font-family:'Liberation Mono';letter-spacing:0px;"> FOREIGN_KEY_CHECKS = </div>
<div class="t" style="left:1355.25px;top:1032.55px;font-size:29.25px;color:#62a6d8;font-weight:400;font-family:'Liberation Mono';letter-spacing:0px;">0</div>
<div class="t" style="left:1372.80px;top:1032.55px;font-size:29.25px;color:#a9b7c6;font-weight:400;font-family:'Liberation Mono';letter-spacing:0px;">;</div>
<div class="t" style="left:916.50px;top:1125.95px;font-size:29.25px;color:#808080;font-weight:400;font-family:'Liberation Mono';letter-spacing:0px;">-- ----------------------------</div>
<div class="t" style="left:916.50px;top:1172.65px;font-size:29.25px;color:#808080;font-weight:400;font-family:'Liberation Mono';letter-spacing:0px;">-- Table structure for user</div>
<div class="t" style="left:916.50px;top:1219.35px;font-size:29.25px;color:#808080;font-weight:400;font-family:'Liberation Mono';letter-spacing:0px;">-- ----------------------------</div>
<div class="t" style="left:916.50px;top:1266.05px;font-size:29.25px;color:#d97b22;font-weight:400;font-family:'Liberation Mono';letter-spacing:0px;">DROP TABLE</div>
<div class="t" style="left:1092.00px;top:1266.05px;font-size:29.25px;color:#a9b7c6;font-weight:400;font-family:'Liberation Mono';letter-spacing:0px;"> IF </div>
<div class="t" style="left:1162.20px;top:1266.05px;font-size:29.25px;color:#d97b22;font-weight:400;font-family:'Liberation Mono';letter-spacing:0px;">EXISTS</div>
<div class="t" style="left:1267.50px;top:1266.05px;font-size:29.25px;color:#a9b7c6;font-weight:400;font-family:'Liberation Mono';letter-spacing:0px;"> </div>
<div class="t" style="left:1285.05px;top:1266.05px;font-size:29.25px;color:#d49a50;font-weight:400;font-family:'Liberation Mono';letter-spacing:0px;">`user`</div>
<div class="t" style="left:1390.35px;top:1266.05px;font-size:29.25px;color:#a9b7c6;font-weight:400;font-family:'Liberation Mono';letter-spacing:0px;">;</div>
<svg class="s" style="left:1355px;top:381px;" width="115" height="27" viewBox="0 0 115 27"><g stroke="#a9b7c6" stroke-width="2.3" fill="none" stroke-linecap="square"><path d="M2.5 3.5 L4.5 5.5 M1.5 9.5 L3.5 11.5 M1.5 22.5 L5.5 15"/><path d="M9 6.5 V3 H24 V6.5 M12.5 9 C12.5 17 11.5 20 8.5 23.5 M12.5 9 H18.5 V20.5 C18.5 22.5 20 23.5 24.5 23.5 V19.5"/><g transform="translate(28.2 0)"><path d="M1.5 2.5 H12 V11 H1.5 Z M6.75 2.5 V17.5 M3.5 5 L5 7.5 M10 5 L8.5 7.5 M1.5 14.5 H12 M0.5 17.5 H13 M1.5 20.5 L0.5 23.5 M4.5 20.5 V23.5 M8 20.5 L9 23.5 M11.5 20.5 L12.5 23.5"/><path d="M14.5 9.5 H25.5 M20 1.5 V9.5 C19.5 16 17.5 20 14.5 23.5 M20 9.5 C21.5 16 23.5 20 26 23.5 M22.5 2.5 L24 5"/></g><g transform="translate(56.4 0)"><path d="M2.5 3.5 H23.5 M3.5 12.5 H22.5 M1.5 22.5 H24.5 M13 3.5 V22.5"/></g><g transform="translate(84.6 0)"><path d="M4 5.5 H22 M1.5 21.5 H25.5"/></g></g></svg>
<div class="r" style="left:917px;top:236px;width:6px;height:36px;background:#bbbbbb;"></div>
<svg class="s" style="left:0px;top:0px;" width="2426" height="1378" viewBox="0 0 2426 1378"><polyline points="1355.2,592.9 1359.2,596.1 1363.2,592.9 1367.2,596.1 1371.2,592.9 1375.2,596.1 1379.2,592.9 1383.2,596.1 1387.2,592.9 1391.2,596.1 1395.2,592.9 1399.2,596.1 1403.2,592.9 1407.2,596.1 1411.2,592.9 1415.2,596.1 1419.2,592.9 1423.2,596.1 1427.2,592.9 1431.2,596.1 1435.2,592.9 1439.2,596.1 1443.2,592.9 1447.2,596.1 1451.2,592.9 1455.2,596.1 1459.2,592.9 1463.2,596.1 1467.2,592.9 1471.2,596.1 1475.2,592.9 1479.2,596.1 1483.2,592.9 1487.2,596.1 1491.2,592.9 1495.2,596.1 1499.2,592.9 1503.2,596.1 1507.2,592.9 1511.2,596.1 1515.2,592.9 1519.2,596.1 1523.2,592.9 1527.2,596.1" stroke="#4a9e55" stroke-width="1.8" fill="none"/></svg>
<div class="r" style="left:2223px;top:241px;width:168px;height:34px;background:#2b2b2b;border-top-left-radius:8px;border-top-right-radius:8px;"></div>
<svg class="s" style="left:2242px;top:254px;" width="28" height="27" viewBox="0 0 28 27"><path d="M2 10 L9 17 L24 2" stroke="#1ea84e" stroke-width="4.5" fill="none"/><path d="M1 25 L5 21 L9 25 L13 21 L17 25 L21 21 L25 25" stroke="#1ea84e" stroke-width="2" fill="none"/></svg>
<div class="t" style="left:2275.00px;top:252.52px;font-size:24px;color:#afb1b3;font-weight:400;font-family:'Liberation Sans';letter-spacing:0px;">1</div>
<svg class="s" style="left:2311px;top:258px;" width="21" height="13" viewBox="0 0 21 13"><path d="M2 11 L10.5 2 L19 11" stroke="#afb1b3" stroke-width="2.5" fill="none"/></svg>
<svg class="s" style="left:2358px;top:259px;" width="21" height="13" viewBox="0 0 21 13"><path d="M2 2 L10.5 11 L19 2" stroke="#afb1b3" stroke-width="2.5" fill="none"/></svg>
<div class="r" style="left:2373px;top:303px;width:17px;height:487px;background:#4e4e4e;border-radius:8px;"></div>
<div class="r" style="left:2397px;top:115px;width:17px;height:1221px;background:#3c3f41;"></div>
<div class="r" style="left:2396px;top:115px;width:1px;height:1172px;background:#323232;"></div>
<svg class="s" style="left:2407px;top:146px;" width="7" height="16" viewBox="0 0 7 16"><path d="M6 0 L6 16 L0 16 Z" fill="#afb1b3"/></svg>
<svg class="s" style="left:2409px;top:178px;" width="5" height="160" viewBox="0 0 5 160"><rect x="1" y="0" width="3" height="3" fill="#9a9a9a"/><rect x="1" y="16" width="3" height="7" fill="#9a9a9a"/><rect x="1" y="32" width="3" height="5" fill="#9a9a9a"/><rect x="1" y="48" width="3" height="9" fill="#9a9a9a"/><rect x="1" y="64" width="3" height="4" fill="#9a9a9a"/><rect x="1" y="80" width="3" height="3" fill="#9a9a9a"/><rect x="1" y="96" width="3" height="7" fill="#9a9a9a"/><rect x="1" y="112" width="3" height="5" fill="#9a9a9a"/><rect x="1" y="128" width="3" height="9" fill="#9a9a9a"/><rect x="1" y="144" width="3" height="4" fill="#9a9a9a"/></svg>
<svg class="s" style="left:2408px;top:416px;" width="6" height="26" viewBox="0 0 6 26"><path d="M4 0 L6 0 L6 26 L0 26 Z" fill="#b8b8b8"/></svg>
<svg class="s" style="left:2409px;top:458px;" width="5" height="56" viewBox="0 0 5 56"><rect x="1" y="0" width="3" height="3" fill="#9a9a9a"/><rect x="1" y="16" width="3" height="7" fill="#9a9a9a"/><rect x="1" y="32" width="3" height="5" fill="#9a9a9a"/><rect x="1" y="48" width="3" height="9" fill="#9a9a9a"/></svg>
<div class="r" style="left:2413px;top:56px;width:13px;height:1322px;background:#2b2b2b;"></div>
<div class="r" style="left:0px;top:1287px;width:2413px;height:2px;background:#2b2b2b;"></div>
<div class="r" style="left:1px;top:1289px;width:2412px;height:47px;background:#3c3f41;"></div>
<div class="r" style="left:0px;top:1336px;width:2413px;height:1px;background:#4d4843;"></div>
<svg class="s" style="left:70px;top:1300px;" width="21" height="27" viewBox="0 0 21 27"><circle cx="4.5" cy="4.5" r="3.5" fill="#afb1b3"/><circle cx="4.5" cy="22" r="3.5" fill="#afb1b3"/><circle cx="16.5" cy="7.5" r="3.5" fill="#afb1b3"/><path d="M4.5 4 L4.5 22 M16.5 8 C16.5 15 10 16 5 19" stroke="#afb1b3" stroke-width="2.8" fill="none"/></svg>
<div class="t" style="left:103.00px;top:1300.75px;font-size:24.08px;color:#bbbbbb;font-weight:400;font-family:'Liberation Mono';letter-spacing:0px;">Git</div>
<svg class="s" style="left:189px;top:1303px;" width="23" height="19" viewBox="0 0 23 19"><rect x="0" y="0" width="5" height="4" fill="#afb1b3"/><rect x="8" y="0" width="15" height="4" fill="#afb1b3"/><rect x="0" y="7.5" width="5" height="4" fill="#afb1b3"/><rect x="8" y="7.5" width="15" height="4" fill="#afb1b3"/><rect x="0" y="15" width="5" height="4" fill="#afb1b3"/><rect x="8" y="15" width="15" height="4" fill="#afb1b3"/></svg>
<div class="t" style="left:221.50px;top:1300.75px;font-size:24.08px;color:#bbbbbb;font-weight:400;font-family:'Liberation Mono';letter-spacing:0px;">TODO</div>
<svg class="s" style="left:326px;top:1300px;" width="24" height="24" viewBox="0 0 24 24"><circle cx="11.5" cy="11.5" r="11.4" fill="#afb1b3"/><rect x="9.5" y="4" width="4.2" height="9" fill="#3c3f41"/><rect x="9.5" y="15.5" width="4.2" height="3.8" fill="#3c3f41"/></svg>
<div class="t" style="left:359.00px;top:1300.75px;font-size:24.08px;color:#bbbbbb;font-weight:400;font-family:'Liberation Mono';letter-spacing:0px;">Problems</div>
<svg class="s" style="left:523px;top:1301px;" width="25" height="22" viewBox="0 0 25 22"><rect x="0" y="0" width="25" height="22" fill="#afb1b3"/><path d="M4 5 L10 9.5 L4 14" stroke="#3c3f41" stroke-width="2.2" fill="none"/><path d="M11 17 L19 17" stroke="#3c3f41" stroke-width="2.2"/></svg>
<div class="t" style="left:558.00px;top:1300.75px;font-size:24.08px;color:#bbbbbb;font-weight:400;font-family:'Liberation Mono';letter-spacing:0px;">Terminal</div>
<svg class="s" style="left:719px;top:1299px;" width="29" height="27" viewBox="0 0 29 27"><path d="M7 0 L22 0 L29 13.5 L22 27 L7 27 L0 13.5 Z" fill="#afb1b3"/><path d="M11 7 L20 13.5 L11 20 Z" fill="#3c3f41"/></svg>
<div class="t" style="left:757.00px;top:1300.75px;font-size:24.08px;color:#bbbbbb;font-weight:400;font-family:'Liberation Mono';letter-spacing:0px;">Services</div>
<svg class="s" style="left:915px;top:1299px;" width="30" height="29" viewBox="0 0 30 29"><path d="M2 9 L10 1 L15 1 L11 6 L28 23 L23 28 L6 11 L5 12 Z" fill="#afb1b3"/></svg>
<div class="t" style="left:953.00px;top:1300.75px;font-size:24.08px;color:#bbbbbb;font-weight:400;font-family:'Liberation Mono';letter-spacing:0px;">Build</div>
<svg class="s" style="left:1072px;top:1299px;" width="28" height="28" viewBox="0 0 28 28"><path d="M13.5 1 L27 8 L13.5 15 L0 8 Z" fill="#afb1b3"/><path d="M0 14 L13.5 21 L27 14 M0 20 L13.5 27 L27 20" stroke="#afb1b3" stroke-width="2.6" fill="none"/></svg>
<div class="t" style="left:1109.00px;top:1300.75px;font-size:24.08px;color:#bbbbbb;font-weight:400;font-family:'Liberation Mono';letter-spacing:0px;">Dependencies</div>
<div class="r" style="left:1px;top:1337.5px;width:2412px;height:41px;background:#3c3f41;"></div>
<svg class="s" style="left:12px;top:1346px;" width="29" height="28" viewBox="0 0 29 28"><rect x="6" y="1.5" width="21" height="19" stroke="#afb1b3" stroke-width="2.4" fill="none"/><path d="M2 6 L2 26 L22 26" stroke="#afb1b3" stroke-width="2.4" fill="none"/></svg>
<div class="t" style="left:66.00px;top:1347.95px;font-size:24.08px;color:#bbbbbb;font-weight:400;font-family:'Liberation Mono';letter-spacing:0px;">Externally added files can be added to Git // View Files // Always Add // Don't Ask Again (a minute ago)</div>
<div class="t" style="left:1897.00px;top:1347.95px;font-size:24.08px;color:#bbbbbb;font-weight:400;font-family:'Liberation Mono';letter-spacing:0px;">1:1</div>
<div class="t" style="left:1970.00px;top:1347.95px;font-size:24.08px;color:#bbbbbb;font-weight:400;font-family:'Liberation Mono';letter-spacing:0px;">LF</div>
<div class="t" style="left:2027.00px;top:1347.95px;font-size:24.08px;color:#bbbbbb;font-weight:400;font-family:'Liberation Mono';letter-spacing:0px;">UTF-8</div>
<div class="t" style="left:2128.00px;top:1347.95px;font-size:24.08px;color:#bbbbbb;font-weight:400;font-family:'Liberation Mono';letter-spacing:0px;">4 spaces</div>
<svg class="s" style="left:2275px;top:1345px;" width="24" height="30" viewBox="0 0 24 30"><circle cx="5" cy="4.5" r="3.5" fill="#afb1b3"/><circle cx="5" cy="25" r="3.5" fill="#afb1b3"/><circle cx="19" cy="7" r="3.5" fill="#afb1b3"/><path d="M5 4 L5 25 M19 8 C19 16 11 17 6 20" stroke="#afb1b3" stroke-width="2.8" fill="none"/></svg>
<div class="t" style="left:2307.00px;top:1347.95px;font-size:24.08px;color:#bbbbbb;font-weight:400;font-family:'Liberation Mono';letter-spacing:0px;">main</div>
<svg class="s" style="left:2389px;top:1346px;" width="24" height="26" viewBox="0 0 24 26"><path d="M1.6 11 V7.6 A5.3 5.3 0 0 1 12.2 7.6 V11" stroke="#afb1b3" stroke-width="3" fill="none"/><rect x="7" y="11.3" width="17" height="13.2" fill="#afb1b3"/></svg>
<div class="r" style="left:0px;top:3px;width:1px;height:1375px;background:#6a6a6a;"></div>
<svg class="s" style="left:0px;top:0px;" width="2426" height="1378" viewBox="0 0 2426 1378"><path d="M629.4 409 L667.3 374 L666.4 387.5 L903.4 340.8 L1038 318.5 C1042 317.8 1046.5 320 1046.5 323.8 C1046.5 327.5 1044 328.6 1040 329.3 L903.4 360.9 L671.1 413.5 L678.7 426.7 Z" fill="#fe2a00"/></svg>
</div></body></html>
